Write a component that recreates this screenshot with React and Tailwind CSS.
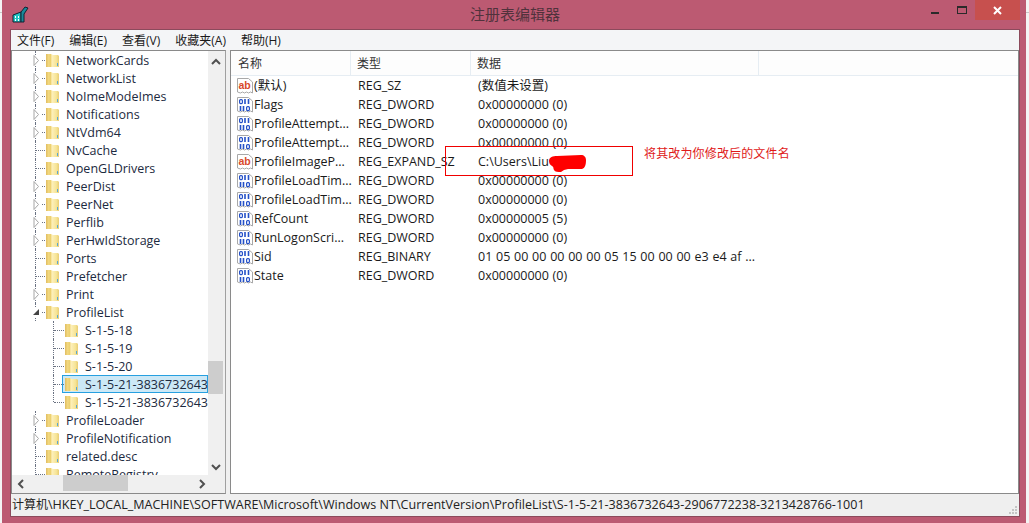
const font = { fontFamily: '"Open Sans", "Noto Sans CJK SC", sans-serif' };

const treeRows = [
  { name: "NetworkCards", arrow: true },
  { name: "NetworkList", arrow: true },
  { name: "NoImeModeImes", arrow: true },
  { name: "Notifications", arrow: true },
  { name: "NtVdm64", arrow: true },
  { name: "NvCache", arrow: false },
  { name: "OpenGLDrivers", arrow: false },
  { name: "PeerDist", arrow: true },
  { name: "PeerNet", arrow: true },
  { name: "Perflib", arrow: true },
  { name: "PerHwIdStorage", arrow: true },
  { name: "Ports", arrow: false },
  { name: "Prefetcher", arrow: false },
  { name: "Print", arrow: true },
  { name: "ProfileList", open: true },
  { name: "S-1-5-18", child: true },
  { name: "S-1-5-19", child: true },
  { name: "S-1-5-20", child: true },
  { name: "S-1-5-21-3836732643-2906772238", child: true, selected: true },
  { name: "S-1-5-21-3836732643-2906772238", child: true, last: true },
  { name: "ProfileLoader", arrow: true },
  { name: "ProfileNotification", arrow: true },
  { name: "related.desc", arrow: false },
  { name: "RemoteRegistry", arrow: false },
];

const values = [
  ["ab", "(默认)", "REG_SZ", "(数值未设置)"],
  ["bin", "Flags", "REG_DWORD", "0x00000000 (0)"],
  ["bin", "ProfileAttempt...", "REG_DWORD", "0x00000000 (0)"],
  ["bin", "ProfileAttempt...", "REG_DWORD", "0x00000000 (0)"],
  ["ab", "ProfileImageP...", "REG_EXPAND_SZ", "C:\\Users\\Liu"],
  ["bin", "ProfileLoadTim...", "REG_DWORD", "0x00000000 (0)"],
  ["bin", "ProfileLoadTim...", "REG_DWORD", "0x00000000 (0)"],
  ["bin", "RefCount", "REG_DWORD", "0x00000005 (5)"],
  ["bin", "RunLogonScri...", "REG_DWORD", "0x00000000 (0)"],
  ["bin", "Sid", "REG_BINARY", "01 05 00 00 00 00 00 05 15 00 00 00 e3 e4 af ..."],
  ["bin", "State", "REG_DWORD", "0x00000000 (0)"],
];

function Folder() {
  return (
    <svg width="14" height="15" viewBox="0 0 14 15" className="shrink-0">
      <defs>
        <linearGradient id="folderFill" x1="0" x2="1" y1="0" y2="0">
          <stop offset="0" stopColor="#e0bc60" />
          <stop offset="0.2" stopColor="#f2d880" />
          <stop offset="0.36" stopColor="#ecd070" />
          <stop offset="0.46" stopColor="#fdf0bc" />
          <stop offset="0.8" stopColor="#f6e496" />
          <stop offset="1" stopColor="#e8cc74" />
        </linearGradient>
      </defs>
      <path d="M0 1h5l2 1h5l1 1v11H0z" fill="url(#folderFill)" />
      <rect x="11" y="10" width="1" height="3" fill="#58a8d8" />
    </svg>
  );
}

function ValueIcon({ type }) {
  return (
    <svg width="16" height="16" viewBox="0 0 16 16" className="shrink-0">
      <path d="M0.5 0.5h11l4 3.5v11l-2-1-2 1-2-1-2 1-2-1-2 1-3-1z" fill="#fff" stroke="#a8a8a8" />
      {type === "ab" ? (
        <text x="1.5" y="11" fontSize="10.5" fontWeight="700" fill="#d8492a" fontFamily="Liberation Sans, sans-serif">ab</text>
      ) : (
        <g fill="none" stroke="#2450c8" strokeWidth="1.2">
          <rect x="2.6" y="2.6" width="2.8" height="4" rx="1" />
          <path d="M8 2v5M11.5 2v5" strokeWidth="1.6" />
          <path d="M3.5 9v5M6.5 9v5" strokeWidth="1.6" />
          <rect x="9.6" y="9.6" width="2.8" height="4" rx="1" />
        </g>
      )}
    </svg>
  );
}

function TreeRow({ row }) {
  const hasArrow = row.arrow || row.open;
  return (
    <div className="h-[18px] flex items-center relative shrink-0">
      {row.child ? (
        <>
          <div className={`absolute left-[41px] top-0 border-l border-dotted border-gray-500 ${row.last ? "h-[9px]" : "h-[18px]"}`} />
          <div className="absolute left-[42px] top-[9px] w-[10px] border-t border-dotted border-gray-500" />
          <div className={`ml-[50px] pl-[3px] h-[18px] flex items-center flex-1 min-w-0 border ${row.selected ? "bg-[#cce8f6] border-[#27a0e0]" : "border-transparent"}`}>
            <div className="-ml-px"><Folder /></div>
            <span className="ml-[6px] pt-[2px] whitespace-nowrap">{row.name}</span>
          </div>
        </>
      ) : (
        <>
          <div className="absolute left-[23px] top-0 h-[18px] border-l border-dotted border-gray-500" />
          <div className={`absolute top-[9px] border-t border-dotted border-gray-500 ${hasArrow ? "left-[30px] w-[3px]" : "left-[24px] w-[9px]"}`} />
          <div className="ml-[34px] relative"><Folder /></div>
          {hasArrow && (
            <svg width="7" height="11" viewBox="0 0 7 11" className="absolute left-[21px] top-[4px] bg-white">
              {row.open
                ? <path d="M6 2v6H0z" fill="#444" />
                : <path d="M1 0.5l4.5 5-4.5 5z" fill="#fff" stroke="#a6a6a6" />}
            </svg>
          )}
          <span className="ml-[6px] pt-[2px] whitespace-nowrap">{row.name}</span>
        </>
      )}
    </div>
  );
}

function Chevron({ dir }) {
  const d = { up: "M1 7l4-4 4 4", down: "M1 3l4 4 4-4", left: "M7 1L3 5l4 4", right: "M3 1l4 4-4 4" }[dir];
  return (
    <svg width="10" height="10" viewBox="0 0 10 10" fill="none" stroke="#505050" strokeWidth="2"><path d={d} /></svg>
  );
}

export default function App() {
  return (
    <div className="w-[1029px] h-[523px] bg-[#f4f4f4] overflow-hidden relative text-[12.5px] text-[#1a1a1a]" style={font}>
      <div className="absolute left-0 right-0 top-[12px] h-px bg-[#c8c8c8]" />
      <div className="relative w-[1024px] h-[523px] ml-[2px] bg-[#bc5a72] flex flex-col">
        {/* title bar */}
        <div className="h-[29px] shrink-0 flex items-start relative">
          <svg width="17" height="17" viewBox="0 0 17 17" className="ml-[10px] mt-[6px]">
            <path d="M1 9l8-3v10H1z" fill="#25c4c4" stroke="#123" />
            <path d="M9 6l4-5 3 1-4 6v8H9z" fill="#1a8a9a" stroke="#123" />
            <path d="M3 10h1v2H3zM6 10h1v2H6zM3 13h1v2H3zM6 13h1v2H6z" fill="#fff" />
          </svg>
          <div className="absolute left-[468px] top-[4px] text-[15px] leading-[20px] text-[#50323c]">注册表编辑器</div>
          <div className="ml-auto flex items-start">
            <div className="w-[8px] h-[2px] bg-[#2a2a2a] mt-[12px] mr-[18px]" />
            <div className="w-[10px] h-[8px] border border-[#2a2a2a] border-t-2 mt-[6px] mr-[8px]" />
            <div className="w-[45px] h-[20px] bg-[#c7504e] mr-[6px] flex items-center justify-center">
              <svg width="9" height="9" viewBox="0 0 9 9" stroke="#fff" strokeWidth="2"><path d="M1 1l7 7M8 1L1 8" /></svg>
            </div>
          </div>
        </div>

        {/* client area */}
        <div className="ml-[8px] mr-[6px] h-[488px] bg-[#f0f0f0] border border-[#8c4a5c] flex flex-col">
          <div className="h-[20px] bg-[#f4f5f7] flex items-center pl-[6px] gap-[15px] shrink-0">
            {["文件(F)", "编辑(E)", "查看(V)", "收藏夹(A)", "帮助(H)"].map((m) => (
              <span key={m} className="text-[12px] leading-[20px] pt-[1px]">{m}</span>
            ))}
          </div>
          <div className="flex h-[444px] gap-[4px] shrink-0">
            {/* tree pane */}
            <div className="w-[215px] border border-[#8a8a8a] border-r-[#a0a0a0] bg-white flex flex-col shrink-0">
              <div className="flex h-[424px] shrink-0">
                <div className="w-[196px] overflow-hidden flex flex-col shrink-0 text-[#1c2a40]">
                  {treeRows.map((r, i) => <TreeRow key={i} row={r} />)}
                </div>
                <div className="flex-1 bg-[#f0f0f0] flex flex-col items-center pr-[2px] relative">
                  <div className="mt-[6px]"><Chevron dir="up" /></div>
                  <div className="mt-auto mb-[3px]"><Chevron dir="down" /></div>
                  <div className="absolute left-0 right-[2px] top-[310px] h-[33px] bg-[#cdcdcd]" />
                </div>
              </div>
              <div className="flex-1 bg-[#f0f0f0] flex items-center justify-between pl-[3px] pr-[18px] relative">
                <div className="pl-[1px]"><Chevron dir="left" /></div>
                <Chevron dir="right" />
                <div className="absolute left-[51px] top-0 w-[65px] h-[16px] bg-[#cdcdcd]" />
              </div>
            </div>
            {/* list pane */}
            <div className="flex-1 border border-[#8a8a8a] bg-white flex flex-col">
              <div className="h-[25px] flex shrink-0 border-b border-[#e6edf3] bg-[#fdfdfd] text-[#333] text-[12px]">
                <div className="w-[120px] pl-[7px] leading-[26px] border-r border-[#e6edf3]">名称</div>
                <div className="w-[120px] pl-[6px] leading-[26px] border-r border-[#e6edf3]">类型</div>
                <div className="w-[288px] pl-[6px] leading-[26px] border-r border-[#e6edf3]">数据</div>
              </div>
              {values.map((v, i) => (
                <div key={i} className="h-[19px] flex items-center shrink-0">
                  <div className="w-[120px] pl-[6px] flex items-center gap-[1px] whitespace-nowrap">
                    <ValueIcon type={v[0]} />
                    <span className="pt-[2px]">{v[1]}</span>
                  </div>
                  <div className="w-[120px] pl-[7px] pt-[2px] whitespace-nowrap">{v[2]}</div>
                  <div className="pl-[7px] pt-[2px] whitespace-nowrap [word-spacing:0.5px]">{v[3]}</div>
                </div>
              ))}
            </div>
          </div>
          {/* status bar */}
          <div className="flex-1 bg-[#efefef] flex items-center pl-[1px] relative whitespace-nowrap text-[#222]">
            <span className="text-[12px]">计算机</span>
            <span className="text-[12.56px]">\HKEY_LOCAL_MACHINE\SOFTWARE\Microsoft\Windows NT\CurrentVersion\ProfileList\S-1-5-21-3836732643-2906772238-3213428766-1001</span>
            <svg width="9" height="9" viewBox="0 0 9 9" className="absolute right-[1px] bottom-[1px]" fill="#c4c4c4">
              <rect x="6" y="0" width="2" height="2" />
              <rect x="3" y="3" width="2" height="2" />
              <rect x="6" y="3" width="2" height="2" />
              <rect x="0" y="6" width="2" height="2" />
              <rect x="3" y="6" width="2" height="2" />
              <rect x="6" y="6" width="2" height="2" />
            </svg>
          </div>
        </div>
      </div>

      {/* annotation drawn over the screenshot */}
      <div className="absolute left-[445px] top-[146px] w-[188px] h-[30px] border border-[#f00000]" />
      <svg width="40" height="18" viewBox="0 0 40 18" className="absolute left-[548px] top-[154px]">
        <path d="M1 7C1 3 5 2 9 2L33 1c3 0 5 2 5 5 0 5-1 8-4 9H20l-4 1-3 2c-3 0-6 0-7-2-1-2 0-3-2-4-2-1-3-3-3-5z" fill="#ff0000" />
      </svg>
      <div className="absolute left-[644px] top-[146px] text-[12px] tracking-[0.15px] leading-[16px] text-[#e01818]">将其改为你修改后的文件名</div>
    </div>
  );
}
